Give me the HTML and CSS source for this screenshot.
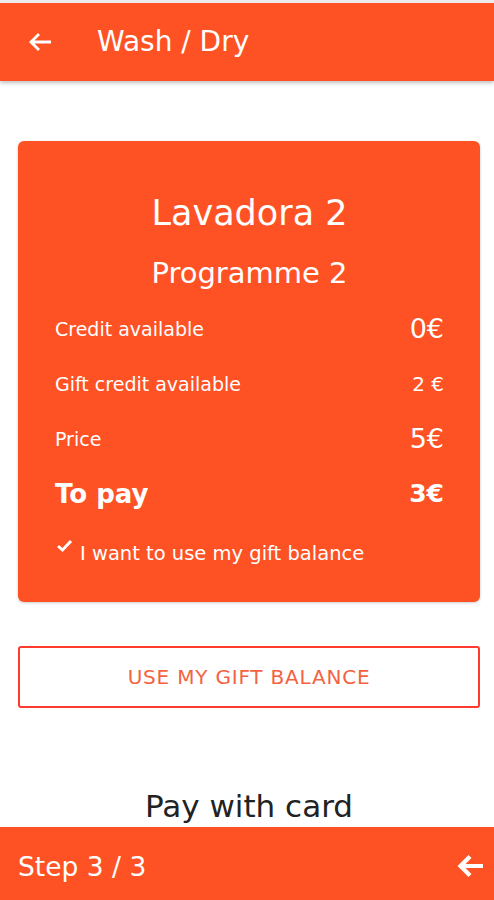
FILE: index.html
```html
<!DOCTYPE html>
<html>
<head>
<meta charset="utf-8">
<link rel="stylesheet" href="styles.css">
</head>
<body>
<div class="page">
  <header class="topbar">
    <svg class="back" width="24" height="22" viewBox="0 0 24 22"><path d="M23 11H3M11 3L3 11l8 8" fill="none" stroke="#fff" stroke-width="2.8"/></svg>
    <span class="title">Wash / Dry</span>
  </header>
  <main class="content">
    <section class="card">
      <h1 class="machine">Lavadora 2</h1>
      <h2 class="programme">Programme 2</h2>
      <div class="row"><span class="label">Credit available</span><span class="val big">0€</span></div>
      <div class="row"><span class="label">Gift credit available</span><span class="val">2 €</span></div>
      <div class="row"><span class="label">Price</span><span class="val big">5€</span></div>
      <div class="row total"><span class="label">To pay</span><span class="val">3€</span></div>
      <div class="check">
        <svg class="tick" width="17" height="15" viewBox="0 0 17 15"><path d="M2 8l4.5 4L15 3" fill="none" stroke="#fff" stroke-width="3"/></svg>
        <span>I want to use my gift balance</span>
      </div>
    </section>
    <button class="gift">USE MY GIFT BALANCE</button>
    <div class="paycard">Pay with card</div>
  </main>
  <footer class="bottombar">
    <span class="step">Step 3 / 3</span>
    <svg class="fwd" width="28" height="26" viewBox="0 0 28 26"><path d="M27 13H5M14 3.5L4.5 13l9.5 9.5" fill="none" stroke="#fff" stroke-width="4.2"/></svg>
  </footer>
</div>
</body>
</html>
```
FILE: styles.css
```css
* { box-sizing: border-box; }
html, body { margin: 0; padding: 0; background: #fff; }
body { font-family: "DejaVu Sans", "Open Sans", sans-serif; }
.page { width: 494px; height: 900px; display: flex; flex-direction: column; border-top: 3px solid #eceaea; overflow: hidden; }
.topbar { height: 78px; flex: none; background: #ff5224; display: flex; align-items: center; padding-left: 28px; box-shadow: 0 2px 4px rgba(0,0,0,0.25); position: relative; z-index: 1; }
.title { color: #fff; font-size: 28px; margin-left: 45px; margin-top: -2px; }
.content { flex: 1; display: flex; flex-direction: column; padding: 60px 14px 0 18px; }
.card { background: #ff5224; border-radius: 6px; height: 461px; color: #fff; padding: 48px 36px 0 37px; box-shadow: 0 1px 3px rgba(0,0,0,0.2); }
.machine { margin: 0; font-weight: 400; font-size: 35px; text-align: center; line-height: 48px; }
.programme { margin: 16px 0 8px; font-weight: 400; font-size: 29px; text-align: center; line-height: 40px; }
.row { display: flex; justify-content: space-between; align-items: center; height: 55px; }
.label { font-size: 19px; }
.val { font-size: 20px; }
.val.big { font-size: 27px; }
.total .label { font-size: 26px; font-weight: 700; }
.total .val { font-size: 25px; font-weight: 700; }
.check { display: flex; align-items: flex-start; margin-top: 15px; font-size: 19.5px; }
.tick { margin: 2px 7px 0 1px; }
.check span { margin-top: 6px; }
.gift { margin-top: 44px; height: 62px; background: #fff; border: 2px solid #ff3b2f; border-radius: 3px; color: #f4623f; font-family: inherit; font-size: 20px; letter-spacing: 0.8px; }
.paycard { margin-top: 80px; text-align: center; font-size: 31px; color: #222; }
.bottombar { height: 73px; flex: none; background: #ff5224; display: flex; align-items: center; justify-content: space-between; padding: 0 10px 0 18px; }
.step { color: #fff; font-size: 26.5px; margin-top: 5px; }
.fwd { margin-top: 4px; }
```
